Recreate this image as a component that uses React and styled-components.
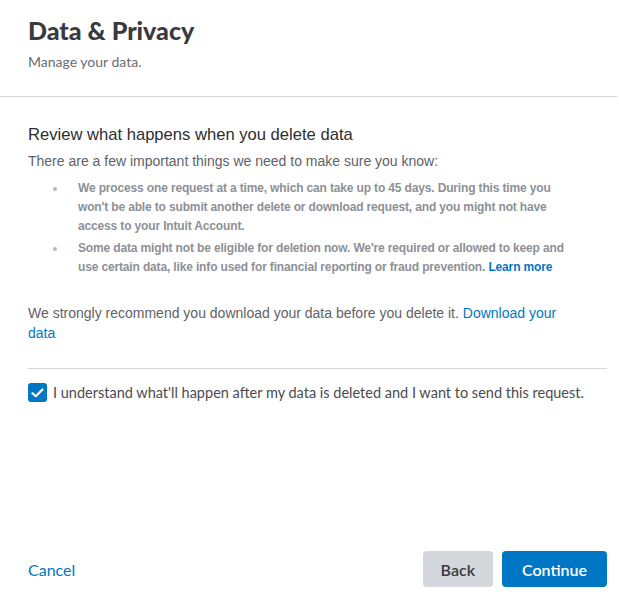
import React, { useState } from "react";
import styled, { createGlobalStyle } from "styled-components";

const Global = createGlobalStyle`
  html, body { margin: 0; padding: 0; background: #fff; }
  body { width: 619px; height: 608px; overflow: hidden; }
`;

const Page = styled.div`
  width: 619px;
  height: 608px;
  display: flex;
  flex-direction: column;
  background: #fff;
`;

const Header = styled.header`
  padding: 15px 28px 0;
  height: 81px;
  border-bottom: 1px solid #d4d7dc;
  margin-right: 2px;
`;

const Title = styled.h1`
  margin: 0;
  font-family: Lato, "Open Sans", sans-serif;
  font-weight: 900;
  font-size: 25px;
  line-height: 30px;
  color: #393a3d;
`;

const Subtitle = styled.p`
  margin: 7px 0 0;
  font-family: Lato, "Open Sans", sans-serif;
  font-size: 14px;
  line-height: 20px;
  color: #6b6c72;
`;

const Body = styled.main`
  flex: 1;
  padding: 26px 12px 0 28px;
  display: flex;
  flex-direction: column;
`;

const SectionTitle = styled.h2`
  margin: 0;
  font-family: "Liberation Sans", Arial, sans-serif;
  font-weight: 400;
  font-size: 16.6px;
  line-height: 24px;
  color: #2d2e31;
`;

const Text = styled.p`
  margin: ${(p) => p.$m || "0"};
  max-width: ${(p) => p.$max || "none"};
  font-family: "Liberation Sans", Arial, sans-serif;
  font-size: 14px;
  line-height: 20px;
  color: #616266;
`;

const List = styled.ul`
  margin: 8px 0 0;
  padding: 0 0 0 50px;
  width: 497px;
  list-style: none;
`;

const Item = styled.li`
  position: relative;
  font-family: "Liberation Sans", Arial, sans-serif;
  font-weight: 700;
  font-size: 12px;
  letter-spacing: -0.15px;
  line-height: 19px;
  color: #8d9096;
  margin-bottom: 3px;
  &::before {
    content: "";
    position: absolute;
    left: -25px;
    top: 8px;
    width: 4px;
    height: 4px;
    border-radius: 50%;
    background: #b5b8bc;
  }
`;

const Link = styled.a`
  color: #0077c5;
  text-decoration: none;
  font-weight: ${(p) => (p.$bold ? 700 : 400)};
  cursor: pointer;
`;

const Divider = styled.hr`
  border: 0;
  border-top: 1px solid #d4d7dc;
  margin: 25px 0 0;
`;

const CheckRow = styled.label`
  display: flex;
  align-items: center;
  gap: 6px;
  margin-top: 14px;
  font-family: Lato, "Open Sans", sans-serif;
  font-size: 14.5px;
  color: #4a4b4f;
  cursor: pointer;
`;

const Box = styled.span`
  width: 19px;
  height: 19px;
  box-sizing: border-box;
  border-radius: 3px;
  background: ${(p) => (p.$on ? "#0077c5" : "#fff")};
  border: ${(p) => (p.$on ? "none" : "1px solid #8d9096")};
  display: flex;
  align-items: center;
  justify-content: center;
  flex-shrink: 0;
`;

const Footer = styled.footer`
  display: flex;
  align-items: center;
  justify-content: space-between;
  padding: 0 12px 21px 28px;
`;

const Cancel = styled.a`
  font-family: Lato, "Open Sans", sans-serif;
  font-size: 16px;
  color: #0077c5;
  cursor: pointer;
`;

const Actions = styled.div`
  display: flex;
  gap: 9px;
`;

const Button = styled.button`
  height: 36px;
  padding: 0 ${(p) => (p.$primary ? "20px" : "18px")};
  border: 0;
  border-radius: 4px;
  font-family: Lato, "Open Sans", sans-serif;
  font-weight: 600;
  font-size: 16px;
  background: ${(p) => (p.$primary ? "#0077c5" : "#d4d7dc")};
  color: ${(p) => (p.$primary ? "#fff" : "#393a3d")};
  cursor: pointer;
`;

export default function App() {
  const [on, setOn] = useState(true);
  return (
    <Page>
      <Global />
      <Header>
        <Title>Data &amp; Privacy</Title>
        <Subtitle>Manage your data.</Subtitle>
      </Header>
      <Body>
        <SectionTitle>Review what happens when you delete data</SectionTitle>
        <Text $m="4px 0 0">There are a few important things we need to make sure you know:</Text>
        <List>
          <Item>
            We process one request at a time, which can take up to 45 days. During this time you
            won't be able to submit another delete or download request, and you might not have
            access to your Intuit Account.
          </Item>
          <Item>
            Some data might not be eligible for deletion now. We're required or allowed to keep and
            use certain data, like info used for financial reporting or fraud prevention.{" "}
            <Link $bold>Learn more</Link>
          </Item>
        </List>
        <Text $m="23px 0 0" $max="545px">
          We strongly recommend you download your data before you delete it.{" "}
          <Link>Download your data</Link>
        </Text>
        <Divider />
        <CheckRow onClick={() => setOn(!on)}>
          <Box $on={on}>
            {on && (
              <svg width="13" height="10" viewBox="0 0 13 10" fill="none">
                <path d="M1.5 5.2 L4.8 8.3 L11.5 1.5" stroke="#fff" strokeWidth="2.2" strokeLinecap="round" strokeLinejoin="round" />
              </svg>
            )}
          </Box>
          I understand what'll happen after my data is deleted and I want to send this request.
        </CheckRow>
      </Body>
      <Footer>
        <Cancel>Cancel</Cancel>
        <Actions>
          <Button>Back</Button>
          <Button $primary>Continue</Button>
        </Actions>
      </Footer>
    </Page>
  );
}
